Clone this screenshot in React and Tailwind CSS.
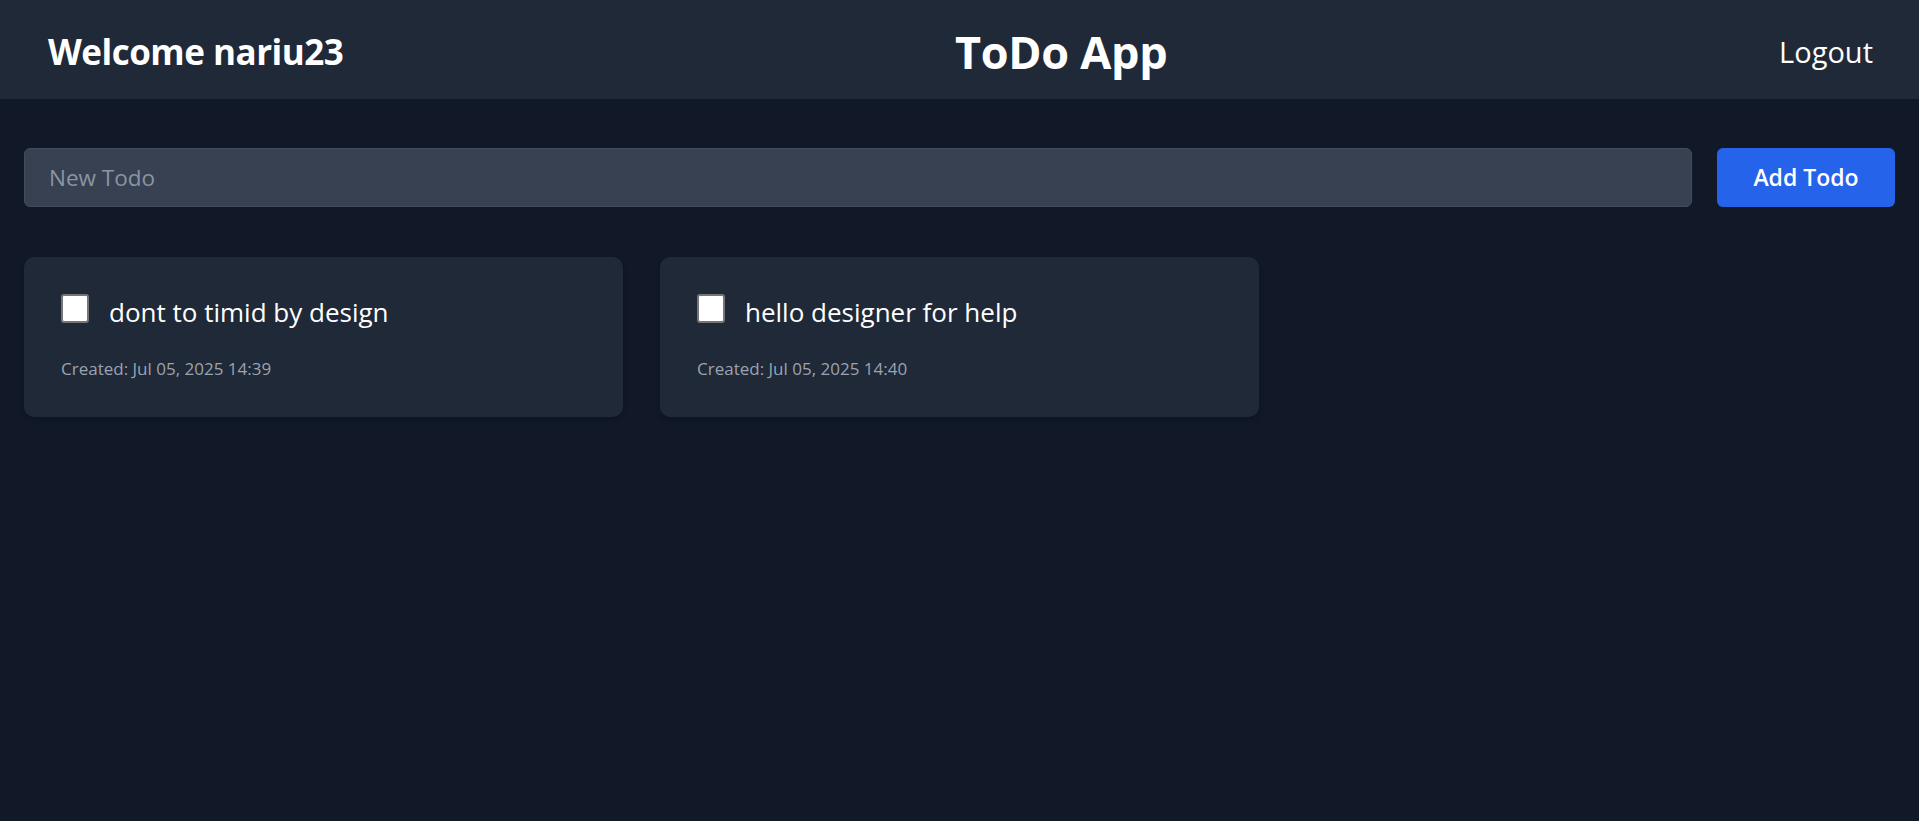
import React, { useState } from "react";

const initialTodos = [
  { id: 1, text: "dont to timid by design", created: "Jul 05, 2025 14:39", done: false },
  { id: 2, text: "hello designer for help", created: "Jul 05, 2025 14:40", done: false },
];

function TodoCard({ todo, onToggle }) {
  return (
    <div className="bg-[#1f2937] rounded-[10px] px-[37px] pt-[37px] pb-[36px] shadow-md">
      <div className="flex items-start gap-[20px]">
        <input
          type="checkbox"
          checked={todo.done}
          onChange={() => onToggle(todo.id)}
          className="appearance-none shrink-0 w-[28px] h-[29px] bg-white border-2 border-[#767676] rounded-[3px] cursor-pointer"
        />
        <span className="text-[26px] leading-[38px] -mt-[1px] text-white">{todo.text}</span>
      </div>
      <p className="mt-[26px] text-[17px] leading-[24px] text-[#9ca3af]">
        Created: {todo.created}
      </p>
    </div>
  );
}

export default function App() {
  const [todos, setTodos] = useState(initialTodos);
  const [value, setValue] = useState("");

  const toggle = (id) =>
    setTodos((prev) => prev.map((t) => (t.id === id ? { ...t, done: !t.done } : t)));

  return (
    <div className="min-h-screen bg-[#111827] text-white font-['Open_Sans','Noto_Sans',sans-serif]">
      <header className="h-[99px] bg-[#1f2937] flex items-center justify-between pl-[48px] pr-[46px] pt-[5px]">
        <h2 className="text-[35px] font-bold tracking-[-0.5px]">Welcome nariu23</h2>
        <h1 className="text-[45px] font-bold tracking-[-0.3px]">ToDo App</h1>
        <button className="text-[29px] font-medium">Logout</button>
      </header>

      <main className="px-[24px] pt-[49px]">
        <div className="flex gap-[25px]">
          <input
            type="text"
            value={value}
            onChange={(e) => setValue(e.target.value)}
            placeholder="New Todo"
            className="flex-1 h-[59px] bg-[#374151] border border-[#424c5b] rounded-[6px] px-[24px] text-[22.5px] text-white placeholder:text-[#8b94a3] outline-none"
          />
          <button className="w-[178px] h-[59px] bg-[#2563eb] rounded-[6px] text-[23px] font-semibold text-white">
            Add Todo
          </button>
        </div>

        <div className="grid grid-cols-3 gap-[37px] mt-[50px]">
          {todos.map((t) => (
            <TodoCard key={t.id} todo={t} onToggle={toggle} />
          ))}
        </div>
      </main>
    </div>
  );
}
